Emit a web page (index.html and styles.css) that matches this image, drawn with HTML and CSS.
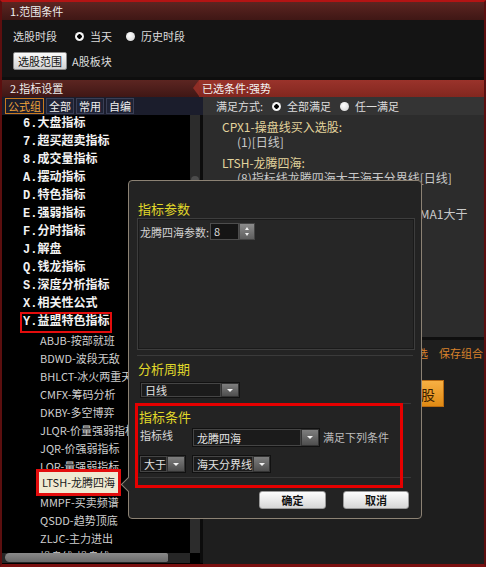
FILE: index.html
```html
<!DOCTYPE html>
<html lang="zh-CN">
<head>
    <meta charset="UTF-8">
    <title>条件选股 - 指标设置</title>
    <link rel="stylesheet" href="styles.css">
</head>
<body>
<div class="app">
    <!-- 1. 范围条件 -->
    <div class="sec-head">1.范围条件</div>
    <div class="range-body">
        <div class="range-row">
            <span class="label">选股时段</span>
            <span class="radio on">当天</span>
            <span class="radio">历史时段</span>
        </div>
        <div class="range-row">
            <button class="btn-light">选股范围</button>
            <span class="label">A股板块</span>
        </div>
    </div>

    <!-- 2. 指标设置 -->
    <div class="sec2-head">
        <div class="sec-head left">2.指标设置</div>
        <div class="chosen-head">已选条件:强势</div>
    </div>

    <div class="main">
        <!-- 左侧: 公式树 -->
        <div class="left-col">
            <div class="tabs">
                <span class="tab active">公式组</span>
                <span class="tab">全部</span>
                <span class="tab">常用</span>
                <span class="tab">自编</span>
            </div>
            <div class="tree-wrap">
                <ul class="tree">
                    <li class="grp">6.大盘指标</li>
                    <li class="grp">7.超买超卖指标</li>
                    <li class="grp">8.成交量指标</li>
                    <li class="grp">A.摆动指标</li>
                    <li class="grp">D.特色指标</li>
                    <li class="grp">E.强弱指标</li>
                    <li class="grp">F.分时指标</li>
                    <li class="grp">J.解盘</li>
                    <li class="grp">Q.钱龙指标</li>
                    <li class="grp">S.深度分析指标</li>
                    <li class="grp">X.相关性公式</li>
                    <li class="grp"><span class="mark">Y.益盟特色指标</span></li>
                    <li class="leaf">ABJB-按部就班</li>
                    <li class="leaf">BDWD-波段无敌</li>
                    <li class="leaf">BHLCT-冰火两重天</li>
                    <li class="leaf">CMFX-筹码分析</li>
                    <li class="leaf">DKBY-多空博弈</li>
                    <li class="leaf">JLQR-价量强弱指标</li>
                    <li class="leaf">JQR-价强弱指标</li>
                    <li class="leaf">LQR-量强弱指标</li>
                    <li class="leaf sel"><span class="picked">LTSH-龙腾四海</span></li>
                    <li class="leaf">MMPF-买卖频谱</li>
                    <li class="leaf">QSDD-趋势顶底</li>
                    <li class="leaf">ZLJC-主力进出</li>
                    <li class="leaf">操盘线-操盘线</li>
                </ul>
                <div class="vscroll"><div class="vthumb"></div></div>
                <div class="gap-col"></div>
                <div class="hscroll"><div class="hthumb"></div></div>
                <div class="corner"></div>
                <div class="gap-col"></div>
            </div>
        </div>

        <!-- 右侧: 已选条件 -->
        <div class="right-col">
            <div class="match-row">
                <span class="label">满足方式:</span>
                <span class="radio on">全部满足</span>
                <span class="radio">任一满足</span>
            </div>
            <div class="cond-list">
                <div class="cond">
                    <div class="cond-name">CPX1-操盘线买入选股:</div>
                    <div class="cond-text">(1)[日线]</div>
                </div>
                <div class="cond">
                    <div class="cond-name">LTSH-龙腾四海:</div>
                    <div class="cond-text">(8)指标线龙腾四海大于海天分界线[日线]</div>
                </div>
                <div class="cond">
                    <div class="cond-name">CMFX-筹码分析:</div>
                    <div class="cond-text">(3)指标线收盘价大于昨日收盘价且MA1大于</div>
                </div>
            </div>
            <div class="divider"></div>
            <div class="actions">
                <div class="links">
                    <span>重新筛选</span>
                    <span>保存组合</span>
                </div>
                <button class="btn-orange">执行选股</button>
            </div>
        </div>
    </div>

    <!-- 指标参数弹窗 -->
    <div class="dialog">
        <div class="dlg-title">指标参数</div>
        <div class="param-box">
            <div class="param-row">
                <span class="param-label">龙腾四海参数:</span>
                <span class="spin">
                    <span class="spin-val">8</span>
                    <span class="spin-btn"><i class="up"></i><i class="down"></i></span>
                </span>
            </div>
        </div>
        <div class="sep"></div>
        <div class="dlg-title sub">分析周期</div>
        <div class="select period"><span class="sel-text">日线</span><span class="sel-arrow"></span></div>

        <div class="cond-section">
            <div class="dlg-title cond-title">指标条件</div>
            <div class="cond-row first">
                <span class="row-label">指标线</span>
                <div class="select line"><span class="sel-text">龙腾四海</span><span class="sel-arrow"></span></div>
                <span class="row-tail">满足下列条件</span>
            </div>
            <div class="cond-row">
                <div class="select op"><span class="sel-text">大于</span><span class="sel-arrow"></span></div>
                <div class="select target"><span class="sel-text">海天分界线</span><span class="sel-arrow"></span></div>
            </div>
        </div>

        <div class="dlg-buttons">
            <button class="btn-dlg ok">确定</button>
            <button class="btn-dlg cancel">取消</button>
        </div>
    </div>
</div>
</body>
</html>
```

FILE: styles.css
```css
* {
    margin: 0;
    padding: 0;
    box-sizing: border-box;
}

body {
    background: #000;
    font-family: "Noto Sans CJK SC", sans-serif;
    font-size: 11px;
    color: #ddd;
}

.app {
    position: relative;
    width: 486px;
    height: 567px;
    border: 2px solid #5c0f0f;
    border-top-color: #b31414;
    border-bottom: 3px solid #7a1010;
    background: #0e0e0e;
    display: flex;
    flex-direction: column;
    overflow: hidden;
}

/* 区块标题 */
.sec-head {
    height: 18px;
    line-height: 18px;
    padding-left: 8px;
    color: #eee;
    font-size: 11px;
    background: linear-gradient(#5c2521, #3f1715);
}

/* 范围条件 */
.range-body {
    height: 57px;
    background: #141414;
    padding: 8px 0 0 11px;
    display: flex;
    flex-direction: column;
    gap: 8px;
    margin-bottom: 3px;
}

.range-row {
    display: flex;
    align-items: center;
    height: 16px;
}

.range-row + .range-row {
    height: 18px;
}

.label {
    color: #ddd;
    white-space: nowrap;
}

.radio {
    display: flex;
    align-items: center;
    color: #ddd;
    margin-left: 18px;
    white-space: nowrap;
}

.radio::before {
    content: '';
    width: 9px;
    height: 9px;
    border-radius: 50%;
    background: radial-gradient(circle at 40% 35%, #fff, #cfcfcf);
    margin-right: 6px;
    box-sizing: border-box;
}

.radio.on::before {
    background: radial-gradient(circle, #000 0 2px, #fff 2.5px, #d4d4d4);
}

.radio + .radio {
    margin-left: 14px;
}

.btn-light {
    width: 54px;
    height: 18px;
    font-family: inherit;
    font-size: 11px;
    color: #111;
    background: linear-gradient(#fbfbfb, #d2d2d2);
    border: 1px solid #8a8a8a;
    border-radius: 2px;
    margin-right: 5px;
}

/* 指标设置标题 */
.sec2-head {
    display: flex;
    height: 17px;
}

.sec2-head .sec-head {
    height: 17px;
    line-height: 17px;
}

.sec-head.left {
    width: 197px;
}

.chosen-head {
    flex: 1;
    position: relative;
    background: linear-gradient(#9a332b, #82271f);
    color: #f2f2f2;
    line-height: 17px;
    padding-left: 3px;
}

.chosen-head::before {
    content: '';
    position: absolute;
    left: -6px;
    top: 0;
    border-top: 8.5px solid transparent;
    border-bottom: 8.5px solid transparent;
    border-right: 6px solid #8e2d25;
}

/* 主区域 */
.main {
    flex: 1;
    display: flex;
    min-height: 0;
}

.left-col {
    width: 201px;
    display: flex;
    flex-direction: column;
}

.tabs {
    height: 18px;
    background: #1b1d2c;
    display: flex;
    gap: 2px;
    padding: 1px 3px;
}

.tab {
    height: 16px;
    line-height: 14px;
    padding: 0 2px;
    border: 1px solid #3a3f56;
    background: #1f2335;
    color: #eee;
}

.tab.active {
    border-color: #c97a1e;
    color: #f1a43a;
    background: #1b1d2c;
}

.tree-wrap {
    flex: 1;
    min-height: 0;
    display: grid;
    grid-template-columns: 188px 10px 3px;
    grid-template-rows: 1fr 10px;
    padding-bottom: 1px;
    background: #000;
}

.tree {
    list-style: none;
    background: #000;
    overflow: hidden;
}

.tree li {
    height: 18px;
    line-height: 18px;
    white-space: nowrap;
}

.grp {
    padding-left: 21px;
    font-family: "Liberation Mono", "Noto Sans CJK SC", monospace;
    font-size: 12px;
    font-weight: bold;
    color: #f2f2f2;
}

.leaf {
    padding-left: 38px;
    font-size: 11px;
    color: #cfcfcf;
}

.mark {
    display: inline-block;
    height: 17px;
    line-height: 17px;
    padding: 0 1px;
    margin-left: -1px;
    outline: 2px solid #e30d0d;
}

.leaf.sel {
    padding-left: 37px;
}

.picked {
    display: inline-block;
    vertical-align: top;
    height: 21px;
    line-height: 21px;
    margin-top: -3px;
    padding: 0 3px;
    background: #efe9d2;
    color: #1a1a1a;
    outline: 3px solid #e30d0d;
}

.vscroll {
    background: #2c2c2c;
    padding: 61px 1px 0;
}

.vthumb {
    height: 280px;
    background: #4c4c4c;
    border-radius: 4px;
}

.gap-col {
    background: #0c0c0c;
}

.hscroll {
    background: #262626;
    padding: 0 0 0 3px;
}

.hthumb {
    width: 163px;
    height: 9px;
    border-radius: 5px 2px 2px 5px;
    background: linear-gradient(#8a8a8a, #6a6a6a);
}

.corner {
    background: #000;
}

/* 右侧 */
.right-col {
    flex: 1;
    display: flex;
    flex-direction: column;
    background: #1e1e1e;
}

.match-row {
    height: 18px;
    background: #343434;
    display: flex;
    align-items: center;
    padding-left: 13px;
}

.match-row .radio {
    margin-left: 9px;
}

.cond-list {
    height: 222px;
    background: #2c2c2c;
    padding: 4px 0 0 19px;
    white-space: nowrap;
    overflow: hidden;
}

.cond + .cond {
    margin-top: 6px;
}

.cond-name {
    line-height: 15px;
    font-size: 12px;
    color: #e3d49c;
}

.cond-text {
    line-height: 15px;
    font-size: 12px;
    color: #c9c9c9;
    padding-left: 15px;
}

.divider {
    height: 3px;
    background: #0f0f0f;
}

.actions {
    flex: 1;
    display: flex;
    flex-direction: column;
    align-items: flex-end;
}

.links {
    display: flex;
    gap: 11px;
    margin-top: 6px;
    padding-right: 1px;
    line-height: 14px;
    color: #d9822b;
}

.btn-orange {
    margin-top: 20px;
    margin-right: 40px;
    width: 74px;
    height: 27px;
    font-family: inherit;
    font-size: 14px;
    color: #3b1d00;
    background: linear-gradient(#f7b043, #e08a14);
    border: 1px solid #b86a10;
}

/* 弹窗 */
.dialog {
    position: absolute;
    left: 126px;
    top: 178px;
    width: 294px;
    height: 339px;
    background: #232323;
    border: 1px solid #8c8274;
    border-radius: 4px;
    display: flex;
    flex-direction: column;
    z-index: 5;
}

.dialog::before {
    content: '';
    position: absolute;
    left: -6px;
    top: 298px;
    width: 10px;
    height: 10px;
    background: #232323;
    border-left: 1px solid #8c8274;
    border-bottom: 1px solid #8c8274;
    transform: rotate(45deg);
}

.dlg-title {
    padding: 19px 0 0 9px;
    line-height: 18px;
    font-size: 13px;
    color: #e0d82a;
}

.dlg-title.sub {
    padding-top: 4px;
    margin-bottom: 4px;
}

.param-box {
    margin: 0 6px 0 8px;
    height: 132px;
    border: 1px solid #3d3d3d;
    box-shadow: inset 0 0 0 1px #1a1a1a;
    background: #262626;
    padding: 4px 0 0 2px;
}

.param-row {
    display: flex;
    align-items: center;
    height: 17px;
}

.param-label {
    color: #d2d2d2;
    width: 70px;
    white-space: nowrap;
}

.spin {
    display: flex;
    height: 17px;
}

.spin-val {
    width: 29px;
    background: #151515;
    border: 1px solid #4d4d4d;
    color: #ddd;
    padding-left: 3px;
    line-height: 15px;
}

.spin-btn {
    width: 16px;
    background: linear-gradient(#8c8c8c, #5e5e5e);
    border: 1px solid #444;
    display: flex;
    flex-direction: column;
    align-items: center;
    justify-content: center;
    gap: 3px;
}

.spin-btn i {
    width: 0;
    height: 0;
    border-left: 2.5px solid transparent;
    border-right: 2.5px solid transparent;
}

.spin-btn .up {
    border-bottom: 3px solid #eee;
}

.spin-btn .down {
    border-top: 3px solid #eee;
}

.sep {
    margin: 5px 8px 0 8px;
    height: 1px;
    background: #3a3a3a;
}

/* 下拉框 */
.select {
    display: flex;
    height: 16px;
    border: 1px solid #111;
}

.sel-text {
    flex: 1;
    background: #1b1b1b;
    border: 1px solid #454545;
    color: #e2e2e2;
    padding-left: 3px;
    line-height: 12px;
    white-space: nowrap;
    display: flex;
    align-items: center;
}

.sel-arrow {
    width: 18px;
    background: linear-gradient(#7e7e7e, #4e4e4e);
    border: 1px solid #333;
    display: flex;
    align-items: center;
    justify-content: center;
}

.sel-arrow::after {
    content: '';
    border-left: 3px solid transparent;
    border-right: 3px solid transparent;
    border-top: 3px solid #f2f2f2;
}

.select.period {
    width: 100px;
    margin-left: 11px;
}

.cond-section {
    position: relative;
    margin: 5px 10px 0 8px;
    border-top: 1px solid #383838;
    border-bottom: 1px solid #383838;
    padding-bottom: 4px;
}

.cond-section::after {
    content: '';
    position: absolute;
    left: -2px;
    top: -1px;
    width: 262px;
    height: 79px;
    border: 3px solid #e50000;
    pointer-events: none;
}

.dlg-title.cond-title {
    padding: 4px 0 0 2px;
}

.cond-row {
    display: flex;
    align-items: center;
    margin-top: 8px;
    padding-left: 2px;
}

.cond-row.first {
    margin-top: 2px;
    align-items: flex-start;
    padding-left: 3px;
}

.row-label {
    width: 52px;
    line-height: 15px;
    color: #d8d8d8;
}

.row-tail {
    margin: 2px 0 0 3px;
    line-height: 15px;
    color: #bdbdbd;
    white-space: nowrap;
}

.select.line {
    width: 128px;
    height: 19px;
}

.select.op {
    width: 47px;
    height: 18px;
}

.select.target {
    width: 79px;
    height: 18px;
    margin-left: 6px;
}

.dlg-buttons {
    display: flex;
    justify-content: flex-end;
    gap: 17px;
    margin-top: 13px;
    padding-right: 12px;
}

.btn-dlg {
    height: 18px;
    font-family: inherit;
    font-size: 11px;
    font-weight: bold;
    color: #111;
    background: linear-gradient(#fdfdfd, #d6d6d6);
    border: 1px solid #9a9a9a;
    border-radius: 3px;
}

.btn-dlg.ok {
    width: 67px;
}

.btn-dlg.cancel {
    width: 66px;
}
```
